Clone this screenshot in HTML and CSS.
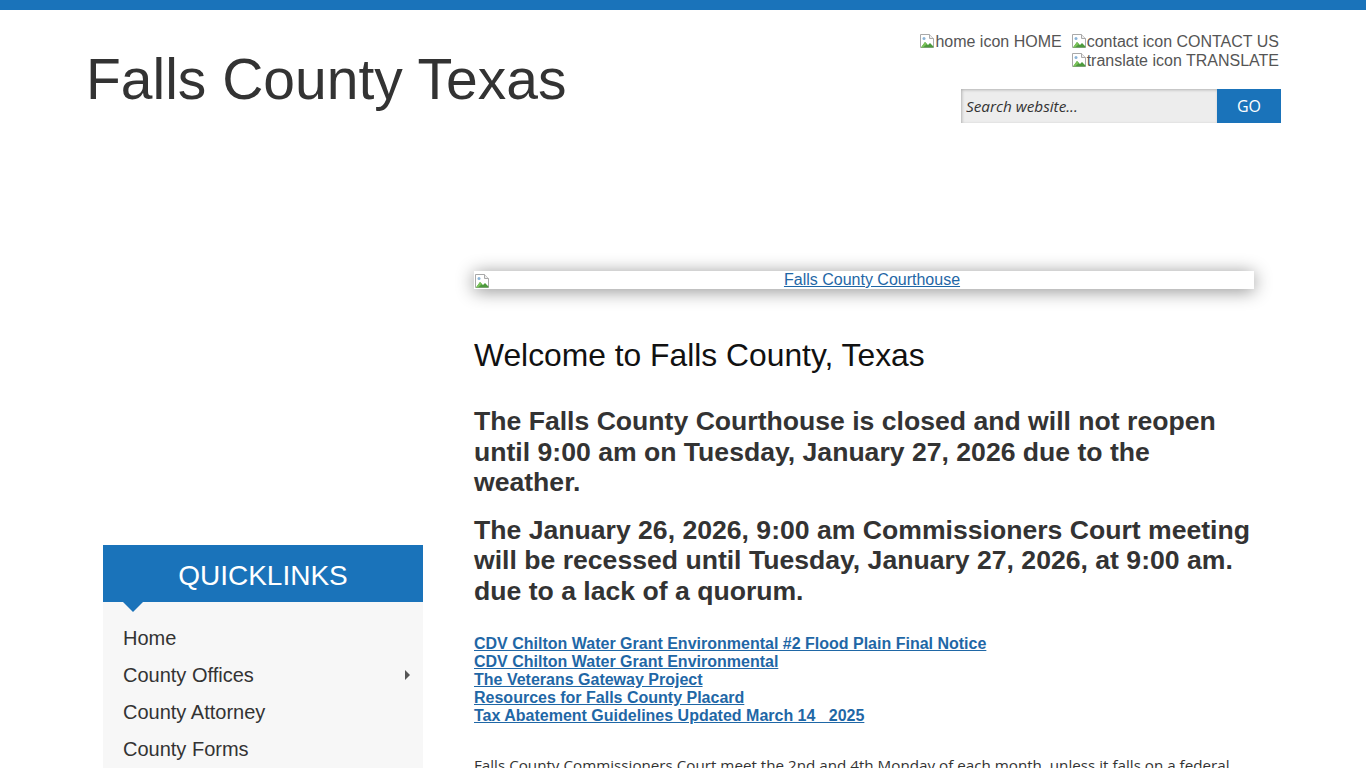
FILE: index.html
```html
<!DOCTYPE html>
<html lang="en">
<head>
<meta charset="utf-8">
<title>Falls County Texas</title>
<link rel="stylesheet" href="styles.css">
</head>
<body>
<div class="topbar"></div>
<header class="header">
  <h1 class="site-title">Falls County Texas</h1>
  <div class="header-right">
    <div class="util-links">
      <div class="util-row">
        <a class="util-link" href="#"><svg class="broken" viewBox="0 0 16 16"><path d="M1.5 1.5h9l4 4v9h-13z" fill="#fff" stroke="#a9a9a9"/><path d="M10.5 1.5v4h4" fill="#eee" stroke="#a9a9a9"/><path d="M2 14.5 L6 9 L9 12 L11 10 L14.5 13.5 V14.5Z" fill="#4c9a3c"/><path d="M2 14.5 L6 9 L8 11 L4 14.5Z" fill="#7cc35a"/><circle cx="5" cy="5.5" r="1.5" fill="#8ab4d8"/></svg>home icon HOME</a>
        <a class="util-link" href="#"><svg class="broken" viewBox="0 0 16 16"><path d="M1.5 1.5h9l4 4v9h-13z" fill="#fff" stroke="#a9a9a9"/><path d="M10.5 1.5v4h4" fill="#eee" stroke="#a9a9a9"/><path d="M2 14.5 L6 9 L9 12 L11 10 L14.5 13.5 V14.5Z" fill="#4c9a3c"/><path d="M2 14.5 L6 9 L8 11 L4 14.5Z" fill="#7cc35a"/><circle cx="5" cy="5.5" r="1.5" fill="#8ab4d8"/></svg>contact icon CONTACT US</a>
      </div>
      <div class="util-row">
        <a class="util-link" href="#"><svg class="broken" viewBox="0 0 16 16"><path d="M1.5 1.5h9l4 4v9h-13z" fill="#fff" stroke="#a9a9a9"/><path d="M10.5 1.5v4h4" fill="#eee" stroke="#a9a9a9"/><path d="M2 14.5 L6 9 L9 12 L11 10 L14.5 13.5 V14.5Z" fill="#4c9a3c"/><path d="M2 14.5 L6 9 L8 11 L4 14.5Z" fill="#7cc35a"/><circle cx="5" cy="5.5" r="1.5" fill="#8ab4d8"/></svg>translate icon TRANSLATE</a>
      </div>
    </div>
    <form class="search">
      <input class="search-input" type="text" placeholder="Search website...">
      <button class="search-btn" type="button">GO</button>
    </form>
  </div>
</header>

<div class="main">
  <aside class="sidebar">
    <div class="quicklinks">
      <div class="ql-head">QUICKLINKS</div>
      <ul class="ql-list">
        <li><a href="#">Home</a></li>
        <li><a href="#">County Offices</a><span class="ql-arrow"></span></li>
        <li><a href="#">County Attorney</a></li>
        <li><a href="#">County Forms</a></li>
      </ul>
    </div>
  </aside>
  <section class="content">
    <div class="banner">
      <svg class="broken banner-icon" viewBox="0 0 16 16"><path d="M1.5 1.5h9l4 4v9h-13z" fill="#fff" stroke="#a9a9a9"/><path d="M10.5 1.5v4h4" fill="#eee" stroke="#a9a9a9"/><path d="M2 14.5 L6 9 L9 12 L11 10 L14.5 13.5 V14.5Z" fill="#4c9a3c"/><path d="M2 14.5 L6 9 L8 11 L4 14.5Z" fill="#7cc35a"/><circle cx="5" cy="5.5" r="1.5" fill="#8ab4d8"/></svg>
      <a class="banner-link" href="#">Falls County Courthouse</a>
    </div>
    <h2 class="welcome">Welcome to Falls County, Texas</h2>
    <p class="notice">The Falls County Courthouse is closed and will not reopen until 9:00 am on Tuesday, January 27, 2026 due to the weather.</p>
    <p class="notice">The January 26, 2026, 9:00 am Commissioners Court meeting will be recessed until Tuesday, January 27, 2026, at 9:00 am. due to a lack of a quorum.</p>
    <div class="doc-links">
      <a href="#">CDV Chilton Water Grant Environmental #2 Flood Plain Final Notice</a>
      <a href="#">CDV Chilton Water Grant Environmental</a>
      <a href="#">The Veterans Gateway Project</a>
      <a href="#">Resources for Falls County Placard</a>
      <a href="#">Tax Abatement Guidelines Updated March 14_ 2025</a>
    </div>
    <p class="body-text">Falls County Commissioners Court meet the 2nd and 4th Monday of each month, unless it falls on a federal holiday. Meetings begin at 9:00 am in the Commissioners Courtroom.</p>
  </section>
</div>
</body>
</html>
```

FILE: styles.css
```css
* { box-sizing: border-box; }
html, body { margin: 0; padding: 0; }
body {
  font-family: "Liberation Sans", Arial, sans-serif;
  color: #333;
  background: #fff;
  overflow: hidden;
}
.topbar {
  height: 10px;
  background: #1a73ba;
}
.header {
  width: 1200px;
  margin: 0 auto;
  display: flex;
  justify-content: space-between;
  align-items: flex-start;
}
.site-title {
  margin: 37px 0 0 3px;
  font-size: 57px;
  font-weight: normal;
  line-height: 64px;
  color: #333;
}
.header-right {
  display: flex;
  flex-direction: column;
  align-items: flex-end;
  padding-top: 22px;
  padding-right: 2px;
}
.util-links {
  display: flex;
  flex-direction: column;
  align-items: flex-end;
  padding-right: 2px;
}
.util-row {
  display: flex;
  gap: 9px;
  line-height: 19px;
}
.util-link {
  font-size: 16px;
  color: #555;
  text-decoration: none;
  display: inline-flex;
  align-items: flex-start;
}
.broken {
  width: 16px;
  height: 16px;
  flex: none;
  margin-top: 1px;
}
.search {
  display: flex;
  margin-top: 19px;
}
.search-input {
  width: 256px;
  height: 34px;
  border: none;
  background: #ededed;
  box-shadow: inset 1px 1px 3px rgba(0,0,0,0.25);
  padding: 0 5px;
  font-family: "Open Sans", sans-serif;
  font-style: italic;
  font-size: 15.3px;
  color: #333;
  outline: none;
}
.search-input::placeholder { color: #333; opacity: 1; }
.search-btn {
  width: 64px;
  height: 34px;
  border: none;
  background: #1a73ba;
  color: #fff;
  font-family: "Open Sans", sans-serif;
  font-size: 16px;
  padding: 0;
}
.main {
  width: 1200px;
  margin: 0 auto;
  display: flex;
  align-items: flex-start;
}
.sidebar {
  width: 320px;
  margin-left: 20px;
  margin-top: 422px;
  flex: none;
}
.ql-head {
  position: relative;
  background: #1a73ba;
  color: #fff;
  font-size: 28px;
  height: 57px;
  line-height: 61px;
  text-align: center;
}
.ql-head::after {
  content: "";
  position: absolute;
  left: 20px;
  bottom: -10px;
  border-left: 10px solid transparent;
  border-right: 10px solid transparent;
  border-top: 10px solid #1a73ba;
}
.ql-list {
  list-style: none;
  margin: 0;
  padding: 18px 0 0 0;
  background: #f7f7f7;
}
.ql-list li {
  position: relative;
  padding: 0 20px;
  height: 37px;
  line-height: 37px;
}
.ql-list a {
  font-size: 20px;
  color: #333;
  text-decoration: none;
}
.ql-arrow {
  position: absolute;
  right: 13px;
  top: 13px;
  border-top: 5px solid transparent;
  border-bottom: 5px solid transparent;
  border-left: 5px solid #555;
}
.content {
  width: 780px;
  margin-left: 51px;
  padding-top: 148px;
  flex: none;
}
.banner {
  width: 780px;
  display: flex;
  align-items: center;
  height: 18px;
  background: #fff;
  box-shadow: 0 2px 18px rgba(0,0,0,0.45);
}
.banner-link {
  flex: 1;
  text-align: center;
  font-size: 16px;
  color: #1f67a6;
  line-height: 18px;
}
.welcome {
  margin: 48px 0 0 0;
  font-size: 31.8px;
  font-weight: normal;
  color: #111;
  line-height: 36px;
}
.notice {
  margin: 33px 0 0 0;
  font-size: 26.6px;
  font-weight: bold;
  line-height: 30.5px;
  color: #333;
}
.notice + .notice { margin-top: 17px; }
.doc-links {
  margin-top: 29px;
  display: flex;
  flex-direction: column;
  align-items: flex-start;
}
.doc-links a {
  font-size: 16px;
  font-weight: bold;
  line-height: 18px;
  color: #1f67a6;
}
.body-text {
  margin: 29px 0 0 0;
  font-family: "Open Sans", sans-serif;
  font-size: 15.2px;
  line-height: 22px;
  color: #333;
}
```
